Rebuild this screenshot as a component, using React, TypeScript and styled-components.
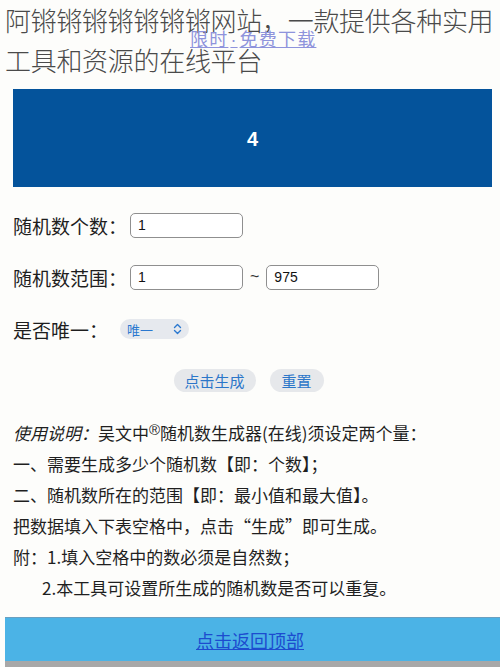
import React from 'react';
import styled, { createGlobalStyle } from 'styled-components';

const GlobalStyle = createGlobalStyle`
  html, body {
    margin: 0;
    padding: 0;
    background: #fdfdfb;
  }
  body {
    font-family: "Noto Sans CJK SC", "Liberation Sans", sans-serif;
    color: #222;
  }
`;

const Page = styled.div`
  width: 500px;
  position: relative;
`;

const Title = styled.h1`
  margin: 0;
  padding: 0 0 0 5px;
  font-size: 26px;
  line-height: 40px;
  font-weight: 300;
  color: #4a4a4a;
  letter-spacing: -0.3px;
`;

const PromoLink = styled.a`
  position: absolute;
  left: 190px;
  top: 27px;
  font-size: 18px;
  line-height: 22px;
  color: #8e93dc;
  text-decoration: underline;
  letter-spacing: 1.2px;
`;

const Dot = styled.span`
  font-family: "Liberation Sans", sans-serif;
  margin: 0 2px;
`;

const Content = styled.div`
  padding: 0 8px 0 13px;
`;

const Banner = styled.div`
  margin-top: 9px;
  height: 98px;
  background: #04539b;
  display: flex;
  align-items: center;
  justify-content: center;
  padding-top: 3px;
  box-sizing: border-box;
  color: #fff;
  font-family: "Liberation Sans", sans-serif;
  font-weight: 700;
  font-size: 20px;
`;

const Form = styled.div`
  margin-top: 12px;
`;

const FormRow = styled.div`
  height: 52px;
  display: flex;
  align-items: center;
`;

const Label = styled.span`
  font-size: 19px;
  color: #1e1e1e;
  margin-right: 3px;
`;

const NumberInput = styled.input`
  box-sizing: border-box;
  width: 113px;
  height: 25px;
  border: 1px solid #8f8f8f;
  border-radius: 5px;
  padding: 0 7px;
  font-family: "Liberation Sans", sans-serif;
  font-size: 14px;
  color: #111;
  background: #fff;
  outline: none;
`;

const Tilde = styled.span`
  font-family: "Liberation Sans", sans-serif;
  font-size: 16px;
  color: #333;
  margin: 0 7px;
`;

const SelectPill = styled.div`
  margin-left: 9px;
  width: 69px;
  height: 20px;
  border-radius: 10px;
  background: #e6e9ee;
  display: flex;
  align-items: center;
  justify-content: space-between;
  padding: 0 7px;
  box-sizing: border-box;
  font-size: 13px;
  color: #2a78cf;
`;

const ButtonRow = styled.div`
  height: 50px;
  display: flex;
  align-items: center;
  justify-content: center;
  gap: 14px;
  padding-right: 8px;
`;

const PillButton = styled.button<{ $w: number }>`
  width: ${(p) => p.$w}px;
  height: 23px;
  border: none;
  border-radius: 12px;
  background: #e6e8eb;
  color: #2b76c9;
  font-family: "Noto Sans CJK SC", sans-serif;
  font-size: 15px;
  padding: 0;
  display: flex;
  align-items: center;
  justify-content: center;
`;

const Instructions = styled.div`
  margin-top: 12px;
  font-size: 17px;
  line-height: 31px;
  color: #1f1f1f;
`;

const Line = styled.div<{ $indent?: boolean }>`
  padding-left: ${(p) => (p.$indent ? '29px' : '0')};
  white-space: nowrap;
`;

const Em = styled.em`
  font-style: italic;
`;

const Reg = styled.sup`
  font-family: "Liberation Sans", sans-serif;
  font-size: 15px;
  line-height: 0;
  vertical-align: 5px;
`;

const Footer = styled.div`
  margin: 14px 0 0 5px;
  height: 43px;
  background: #4bb3e6;
  border-top: 1px solid #6aa0c0;
  display: flex;
  align-items: center;
  justify-content: center;
  padding-right: 5px;
`;

const FooterLink = styled.a`
  font-size: 18px;
  color: #1c4ccf;
  text-decoration: underline;
`;

const Shade = styled.div`
  margin-left: 5px;
  height: 8px;
  background: #a8a8a8;
`;

function Chevrons() {
  return (
    <svg width="9" height="12" viewBox="0 0 9 12" fill="none" stroke="#2a78cf" strokeWidth="1.4" strokeLinecap="round" strokeLinejoin="round">
      <path d="M1.5 4.5 L4.5 1.5 L7.5 4.5" />
      <path d="M1.5 7.5 L4.5 10.5 L7.5 7.5" />
    </svg>
  );
}

export default function App() {
  return (
    <Page>
      <GlobalStyle />
      <Title>
        阿锵锵锵锵锵锵锵网站，一款提供各种实用
        <br />
        工具和资源的在线平台
      </Title>
      <PromoLink>
        限时<Dot>·</Dot>免费下载
      </PromoLink>
      <Content>
        <Banner>4</Banner>
        <Form>
          <FormRow>
            <Label>随机数个数：</Label>
            <NumberInput defaultValue="1" />
          </FormRow>
          <FormRow>
            <Label>随机数范围：</Label>
            <NumberInput defaultValue="1" />
            <Tilde>~</Tilde>
            <NumberInput defaultValue="975" />
          </FormRow>
          <FormRow>
            <Label>是否唯一：</Label>
            <SelectPill>
              <span>唯一</span>
              <Chevrons />
            </SelectPill>
          </FormRow>
          <ButtonRow>
            <PillButton $w={82}>点击生成</PillButton>
            <PillButton $w={54}>重置</PillButton>
          </ButtonRow>
        </Form>
        <Instructions>
          <Line>
            <Em>使用说明：</Em>吴文中<Reg>®</Reg>随机数生成器(在线)须设定两个量：
          </Line>
          <Line>一、需要生成多少个随机数【即：个数】；</Line>
          <Line>二、随机数所在的范围【即：最小值和最大值】。</Line>
          <Line>把数据填入下表空格中，点击“生成”即可生成。</Line>
          <Line>附：1.填入空格中的数必须是自然数；</Line>
          <Line $indent>2.本工具可设置所生成的随机数是否可以重复。</Line>
        </Instructions>
      </Content>
      <Footer>
        <FooterLink>点击返回顶部</FooterLink>
      </Footer>
      <Shade />
    </Page>
  );
}
